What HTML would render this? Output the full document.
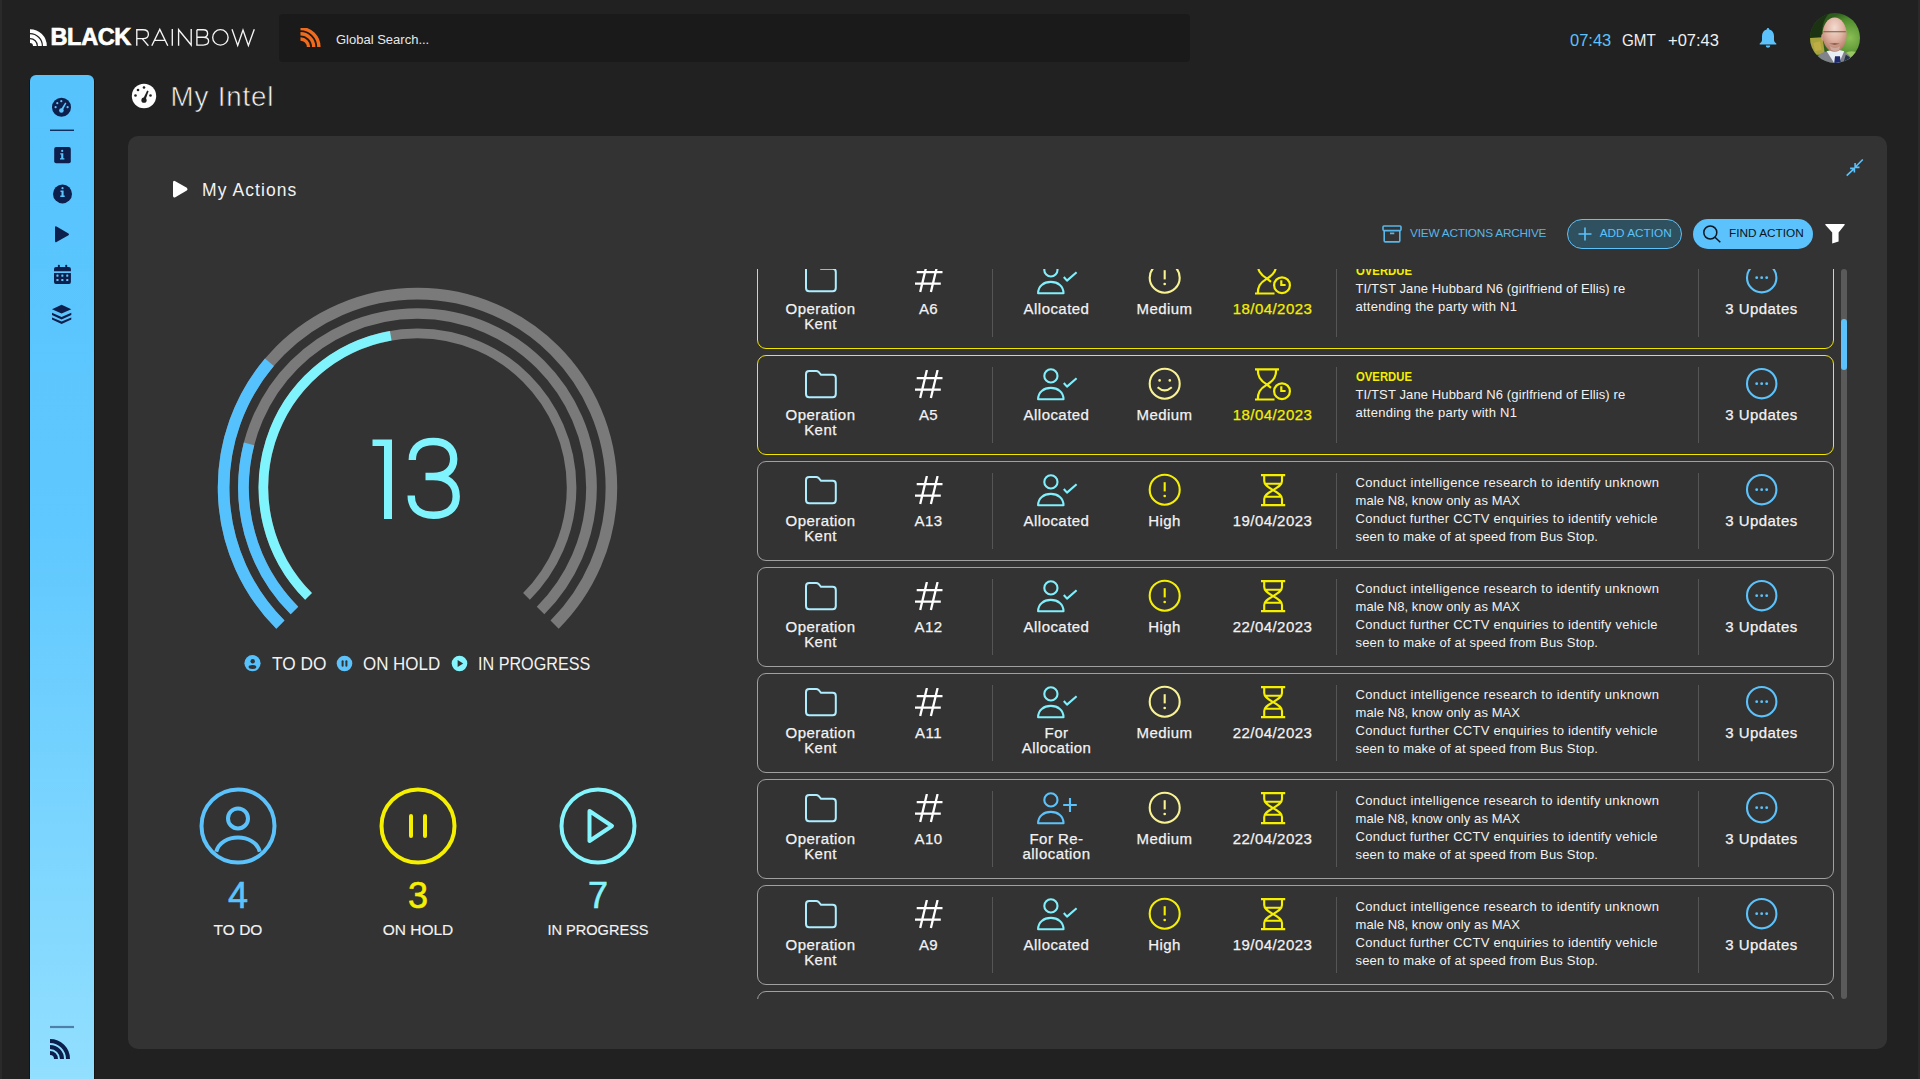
<!DOCTYPE html>
<html><head><meta charset="utf-8">
<style>
*{margin:0;padding:0;box-sizing:border-box}
html,body{width:1920px;height:1079px;overflow:hidden;background:#212121;font-family:"Liberation Sans",sans-serif;color:#fff}
.a{position:absolute}
#edgeL{left:0;top:0;width:2px;height:1079px;background:#2a2a2a}
#edgeR{right:0;top:0;width:2px;height:1079px;background:#2a2a2a}
#search{left:279px;top:14px;width:911px;height:48px;background:#1a1a1a;border-radius:4px}
#side{left:30px;top:75px;width:64px;height:1004px;border-radius:6px 6px 0 0;background:linear-gradient(#56c3fd 0%,#5fc8fe 45%,#92dfff 100%)}
#panel{left:128px;top:136px;width:1759px;height:913px;background:#333333;border-radius:10px}
#list{left:757px;top:269px;width:1080px;height:730px;overflow:hidden}
.card{left:0;width:1077px;height:100px}
.card::before{content:"";position:absolute;left:0;top:0;right:0;bottom:0;border:1.5px solid #a0a0a0;border-radius:9px}
.card.over::before{border-color:#f0e600}
.dv{top:12px;width:1px;height:76px;background:#555}
.desc{left:598.5px;top:12.8px;font-size:13px;line-height:18px;color:#f2f2f2;white-space:nowrap}
.od{color:#f5ef00;font-weight:bold;display:inline-block;transform:scaleX(.87);transform-origin:0 0}
.lbl{text-align:center;font-size:15px;line-height:15px;letter-spacing:.45px;white-space:nowrap;-webkit-text-stroke:.25px currentColor}
#track{left:1841px;top:269px;width:6px;height:730px;border-radius:3px;background:#5a5a5a}
#thumb{left:1841px;top:318.5px;width:6px;height:51px;border-radius:3px;background:#5bc2fb}
.txt{white-space:nowrap;line-height:1}
</style></head><body>
<div class="a" id="edgeL"></div><div class="a" id="edgeR"></div>

<!-- LOGO -->
<svg class="a" style="left:0;top:0" width="270" height="60" viewBox="0 0 270 60">
<g fill="none" stroke="#fff" stroke-width="3.8">
<path d="M30 41.1 A4.9 4.9 0 0 1 34.9 46"/>
<path d="M30 36.1 A9.9 9.9 0 0 1 39.9 46"/>
<path d="M30 31.1 A14.9 14.9 0 0 1 44.9 46"/>
</g>
<g fill="none" stroke="#f4f4f4" stroke-width="1.35" stroke-linejoin="miter">
<path d="M136.8 45.7 L136.8 29.75 L143 29.75 C146.6 29.75 148.4 31.6 148.4 34.2 C148.4 36.8 146.6 38.6 143 38.6 L136.8 38.6 M142.2 38.6 L148.4 45.7"/>
<path d="M151.8 45.7 L159.8 29.4 L167.8 45.7 M154.6 40.3 L165 40.3"/>
<path d="M172.3 29.1 L172.3 45.7"/>
<path d="M178.6 45.7 L178.6 29.75 L191.2 45.05 L191.2 29.1"/>
<path d="M196.9 29.75 L203.3 29.75 C206.3 29.75 207.6 31.4 207.6 33.4 C207.6 35.6 206 37.2 203.3 37.2 L196.9 37.2 M203.3 37.2 C206.9 37.2 208.6 39 208.6 41.1 C208.6 43.4 206.9 45.05 203.3 45.05 L196.9 45.05 L196.9 29.75"/>
<ellipse cx="220.4" cy="37.4" rx="7.7" ry="7.75"/>
<path d="M232 29.3 L237.7 45.5 L243 30 L248.4 45.5 L254.3 29.3"/>
</g>
</svg>
<div class="a txt" style="left:50.5px;top:26.3px;font-size:23.5px;font-weight:bold;letter-spacing:-0.35px;-webkit-text-stroke:0.7px #fff">BLACK</div>
<!-- SEARCH -->
<div class="a" id="search"></div>
<svg class="a" style="left:299px;top:28px" width="22" height="21" viewBox="0 0 22 21">
<g fill="none" stroke="#f26b1d" stroke-width="3.4" stroke-linecap="butt">
<path d="M1.5 11 A8 8 0 0 1 9.5 19"/>
<path d="M1.5 5.8 A13.2 13.2 0 0 1 14.7 19"/>
<path d="M1.5 0.6 A18.4 18.4 0 0 1 19.9 19"/>
</g></svg>
<div class="a txt" style="left:336px;top:33px;font-size:13px;color:#e8e8e8">Global Search...</div>

<!-- TIME -->
<div class="a txt" style="left:1570px;top:32px;font-size:16.5px;color:#5bc2fb">07:43</div>
<div class="a txt" style="left:1622px;top:32px;font-size:16.5px;color:#f0f0f0;transform:scaleX(.92);transform-origin:0 0">GMT</div>
<div class="a txt" style="left:1668px;top:32px;font-size:16.5px;color:#f0f0f0">+07:43</div>
<!-- BELL -->
<svg class="a" style="left:1759px;top:28px" width="18" height="20" viewBox="0 0 18 20">
<path fill="#5bc2fb" d="M9 0 C9.8 0 10.2 .6 10.2 1.4 C13.2 2 15 4.5 15 8 L15 12 C15 13.5 16 14.5 17.3 15.6 L17.3 16.6 L0.7 16.6 L0.7 15.6 C2 14.5 3 13.5 3 12 L3 8 C3 4.5 4.8 2 7.8 1.4 C7.8 .6 8.2 0 9 0Z M6.8 17.6 L11.2 17.6 C11.2 19 10.2 19.8 9 19.8 C7.8 19.8 6.8 19 6.8 17.6Z"/></svg>
<!-- AVATAR -->
<svg class="a" style="left:1810px;top:13px" width="50" height="50" viewBox="0 0 60 60">
<defs><clipPath id="avc"><circle cx="30" cy="30" r="30"/></clipPath>
<radialGradient id="bgG" cx="80%" cy="50%" r="55%"><stop offset="0" stop-color="#8cbf55"/><stop offset="0.7" stop-color="#4d8a2c"/><stop offset="1" stop-color="#2d5a1d"/></radialGradient>
<radialGradient id="skin" cx="50%" cy="30%" r="65%"><stop offset="0" stop-color="#f2dcd2"/><stop offset="0.55" stop-color="#e0b3a2"/><stop offset="1" stop-color="#b9826f"/></radialGradient>
</defs>
<g clip-path="url(#avc)">
<rect width="60" height="60" fill="url(#bgG)"/>
<path d="M0 0 L24 0 C18 4 14 14 14 30 L0 30Z" fill="#1b3313"/>
<path d="M0 30 L15 29 L18 50 L0 50Z" fill="#a9a43e"/>
<path d="M4 36 L12 34 L14 44 L6 46Z" fill="#c9b04a" opacity="0.7"/>
<ellipse cx="50" cy="54" rx="11" ry="8" fill="#a5d068" opacity="0.85"/>
<path d="M6 60 L10 51 C16 46 22 45 30 47 C38 45 44 46 48 52 L52 60Z" fill="#80838a"/>
<path d="M20 46 L29 60 L35 60 L41 46 L34 44 L27 44Z" fill="#e9edf5"/>
<path d="M30 52 L36 52 L37 60 L29 60Z" fill="#1f2a6a"/>
<path d="M43 50 L48 53 L45 60 L40 60Z" fill="#25324a"/>
<ellipse cx="16" cy="29" rx="2.5" ry="4" fill="#d29c88"/>
<ellipse cx="29.5" cy="26" rx="14.5" ry="20.5" fill="url(#skin)"/>
<path d="M16 22.5 L43 22.5" stroke="#6a6040" stroke-width="1.3"/>
<path d="M23 37 Q30 35.5 36 37 Q30 39 23 37Z" fill="#7a4a40"/>
<path d="M24 40 Q30 44 36 40 L35 44 Q30 47 25 44Z" fill="#d8c0b8" opacity="0.6"/>
</g></svg>
<!-- SIDEBAR -->
<div class="a" id="side"></div><div class="a" style="left:29px;top:80px;width:1px;height:999px;background:#171513"></div><div class="a" style="left:94px;top:80px;width:1px;height:999px;background:#171513"></div>


<!-- SIDEBAR ICONS -->
<svg class="a" style="left:30px;top:75px" width="64" height="1004" viewBox="0 0 64 1004">
<g fill="#0c1f4d">
 <circle cx="31.5" cy="32.3" r="9.5"/>
 <rect x="20" y="54.6" width="24" height="1.3"/>
 <rect x="24.2" y="71.9" width="16.6" height="16.4" rx="2"/>
 <circle cx="32.5" cy="118.9" r="9.5"/>
 <path d="M26.5 151.5 Q25 150.7 25 152.5 L25 166 Q25 167.8 26.5 167 L38.5 160.2 Q39.6 159.3 38.5 158.4Z"/>
 <path d="M24 194 Q24 192 26 192 L38.9 192 Q40.9 192 40.9 194 L40.9 196.2 L24 196.2Z"/>
 <rect x="27.9" y="189.8" width="1.9" height="3.5" rx="0.8"/><rect x="35.3" y="189.8" width="1.9" height="3.5" rx="0.8"/>
 <path d="M24 198 L40.9 198 L40.9 207 Q40.9 208.9 39 208.9 L25.9 208.9 Q24 208.9 24 207Z"/>
 <path d="M31.6 229.8 L41.3 234.3 L31.6 238.6 L22 234.3Z"/>
 <path d="M22 237.7 L31.6 242.1 L41.3 237.7 L41.3 240 L31.6 244.4 L22 240Z"/>
 <path d="M22 242.5 L31.6 246.6 L41.3 242.5 L41.3 244.6 L31.6 248.9 L22 244.6Z"/>
</g>
<g fill="#5bc5fe">
 <circle cx="27.3" cy="28.2" r="1.1"/><circle cx="31.3" cy="26.2" r="1.1"/><circle cx="25.6" cy="32.2" r="1.1"/><circle cx="37.6" cy="32.2" r="1.1"/>
 <circle cx="31.4" cy="35.5" r="2.3"/><path d="M30.5 35 L35.2 27.6 L36.4 28.3 L32.4 36Z"/>
 <circle cx="32.2" cy="75.9" r="1.1"/><path d="M30.2 78.3 L33.3 78.3 L33.3 83.2 L34.4 83.2 L34.4 84.6 L30 84.6 L30 83.2 L31.2 83.2 L31.2 79.6 L30.2 79.6Z"/>
 <circle cx="32.5" cy="113.2" r="1.1"/><path d="M30.5 115.6 L33.6 115.6 L33.6 120.5 L34.7 120.5 L34.7 121.9 L30.3 121.9 L30.3 120.5 L31.5 120.5 L31.5 116.9 L30.5 116.9Z"/>
 <rect x="26.4" y="199.6" width="2.1" height="2.1" rx="0.4"/><rect x="31.3" y="199.6" width="2.1" height="2.1" rx="0.4"/><rect x="36.2" y="199.6" width="2.1" height="2.1" rx="0.4"/>
 <rect x="26.4" y="204" width="2.1" height="2.1" rx="0.4"/><rect x="31.3" y="204" width="2.1" height="2.1" rx="0.4"/><rect x="36.2" y="204" width="2.1" height="2.1" rx="0.4"/>
</g>
<rect x="20" y="950.9" width="24" height="2.2" fill="#4d7fa8"/>
<g fill="none" stroke="#0c1f4d" stroke-width="4">
 <path d="M20 978 A6 6 0 0 1 26 984"/>
 <path d="M20 972 A12 12 0 0 1 32 984"/>
 <path d="M20 966 A18 18 0 0 1 38 984"/>
</g>
</svg>

<!-- TITLE -->
<svg class="a" style="left:131px;top:83px" width="26" height="26" viewBox="0 0 26 26">
<circle cx="13" cy="13" r="12.2" fill="#fff"/>
<g fill="#212121"><circle cx="13" cy="4.5" r="1.3"/><circle cx="7" cy="7" r="1.3"/><circle cx="4.5" cy="12.5" r="1.3"/><circle cx="19.5" cy="12.5" r="1.3"/>
<circle cx="13" cy="17.2" r="2.6"/><path d="M11.8 16.5 L16.2 7.5 L17.6 8.2 L14.2 17.4Z"/></g></svg>
<div class="a txt" style="left:170.5px;top:82.5px;font-size:27.7px;letter-spacing:0.85px;color:#f2f2f2;-webkit-text-stroke:0.6px #212121;paint-order:normal">My Intel</div>

<!-- PANEL -->
<div class="a" id="panel"></div>

<!-- PANEL LEFT -->
<svg class="a" style="left:172px;top:180px" width="18" height="19" viewBox="0 0 18 19"><path d="M1 2.6 Q1 0 3.3 1.2 L14.8 7.8 Q16.4 9.2 14.8 10.6 L3.3 17.2 Q1 18.4 1 15.8Z" fill="#fff"/></svg>
<div class="a txt" style="left:202px;top:181.7px;font-size:17.5px;letter-spacing:1.08px;color:#f2f2f2">My Actions</div>
<svg class="a" style="left:0;top:0" width="900" height="1079">
<path d="M280.39 624.61 A193.9 193.9 0 1 1 554.61 624.61" fill="none" stroke="#7a7a7a" stroke-width="11.6"/>
<path d="M280.39 624.61 A193.9 193.9 0 0 1 269.40 362.35" fill="none" stroke="#55c1fd" stroke-width="11.6"/>
<path d="M294.46 610.54 A174.0 174.0 0 1 1 540.54 610.54" fill="none" stroke="#7a7a7a" stroke-width="10.7"/>
<path d="M294.46 610.54 A174.0 174.0 0 0 1 249.04 443.93" fill="none" stroke="#55c1fd" stroke-width="10.7"/>
<path d="M308.53 596.47 A154.1 154.1 0 1 1 526.47 596.47" fill="none" stroke="#7a7a7a" stroke-width="9.6"/>
<path d="M308.53 596.47 A154.1 154.1 0 0 1 390.74 335.74" fill="none" stroke="#80f4fd" stroke-width="9.6"/>
<g fill="#80f4fd"><path d="M372.5 439.5 L392 439.5 L392 519 L384 519 L384 446 L372.5 446Z"/></g>
<path d="M412.3 460 C412.3 447 421.5 441.5 433.3 441.5 C445.5 441.5 453.7 448 453.7 459 C453.7 470 445.5 476.5 433 476.5 L425.5 476.5 L433 476.5 C447.5 476.5 456.2 484 456.2 496.5 C456.2 509 446.5 515.3 433.5 515.3 C419.5 515.3 411.2 508 411.2 495.5" fill="none" stroke="#80f4fd" stroke-width="7.4"/>
</svg>

<!-- LEGEND -->
<svg class="a" style="left:244px;top:655px" width="17" height="17" viewBox="0 0 17 17"><circle cx="8.5" cy="8.2" r="8.1" fill="#55c1fd"/><circle cx="8.7" cy="6.3" r="2.2" fill="#333"/><ellipse cx="8.5" cy="12" rx="3.9" ry="1.9" fill="#333"/></svg>
<div class="a txt" style="left:271.6px;top:655px;font-size:18px;color:#f2f2f2;transform:scaleX(.961);transform-origin:0 0">TO DO</div>
<svg class="a" style="left:336px;top:655px" width="17" height="17" viewBox="0 0 17 17"><circle cx="8.5" cy="8.5" r="7.8" fill="#5bc2fb"/><rect x="5.6" y="5.2" width="2" height="6.6" rx="1" fill="#333"/><rect x="9.4" y="5.2" width="2" height="6.6" rx="1" fill="#333"/></svg>
<div class="a txt" style="left:363.3px;top:655px;font-size:18px;color:#f2f2f2;transform:scaleX(.941);transform-origin:0 0">ON HOLD</div>
<svg class="a" style="left:451px;top:655px" width="17" height="17" viewBox="0 0 17 17"><circle cx="8.5" cy="8.5" r="7.8" fill="#84f4fd"/><path d="M6.6 5 L12.2 8.5 L6.6 12Z" fill="#333"/></svg>
<div class="a txt" style="left:477.8px;top:655px;font-size:18px;color:#f2f2f2;transform:scaleX(.898);transform-origin:0 0">IN PROGRESS</div>

<!-- STATS -->
<svg class="a" style="left:198px;top:786px" width="80" height="80" viewBox="0 0 80 80"><g fill="none" stroke="#5bc2fb" stroke-width="4"><circle cx="40" cy="40" r="36.5"/><circle cx="40" cy="32.4" r="10"/><path d="M18.2 65.8 C23 46.8 57 46.8 61.8 65.8"/></g></svg>
<div class="a txt" style="left:138px;top:878px;width:200px;text-align:center;font-size:36px;color:#5bc2fb;-webkit-text-stroke:.6px #5bc2fb">4</div>
<div class="a txt" style="left:138px;top:922px;width:200px;text-align:center;font-size:15.5px;color:#f2f2f2;-webkit-text-stroke:.15px #f2f2f2">TO DO</div>
<svg class="a" style="left:378px;top:786px" width="80" height="80" viewBox="0 0 80 80"><g fill="none" stroke="#f5ef00" stroke-width="4" stroke-linecap="round"><circle cx="40" cy="40" r="36.5"/><path d="M33 30 L33 50 M47 30 L47 50"/></g></svg>
<div class="a txt" style="left:318px;top:878px;width:200px;text-align:center;font-size:36px;color:#f5ef00;-webkit-text-stroke:.6px #f5ef00">3</div>
<div class="a txt" style="left:318px;top:922px;width:200px;text-align:center;font-size:15.5px;color:#f2f2f2;-webkit-text-stroke:.15px #f2f2f2">ON HOLD</div>
<svg class="a" style="left:558px;top:786px" width="80" height="80" viewBox="0 0 80 80"><g fill="none" stroke="#84f4fd" stroke-width="4" stroke-linejoin="round"><circle cx="40" cy="40" r="36.5"/><path d="M31.5 25 L54 40 L31.5 55Z"/></g></svg>
<div class="a txt" style="left:498px;top:878px;width:200px;text-align:center;font-size:36px;color:#84f4fd;-webkit-text-stroke:.6px #84f4fd">7</div>
<div class="a txt" style="left:498px;top:922px;width:200px;text-align:center;font-size:15.5px;color:#f2f2f2;-webkit-text-stroke:.15px #f2f2f2;transform:scaleX(.94)">IN PROGRESS</div>

<!-- COMPRESS -->
<svg class="a" style="left:1844px;top:157px" width="22" height="22" viewBox="0 0 22 22"><g fill="none" stroke="#5bc2fb" stroke-width="1.6"><path d="M18.8 2.5 L11.1 10.3 M11.1 6.1 L11.1 10.3 L15.5 10.4 M2.7 18.6 L10.4 11.4 M6.1 11.4 L10.4 11.4 L10.4 15.6"/></g></svg>
<!-- TOOLBAR -->
<svg class="a" style="left:1382px;top:225px" width="20" height="18" viewBox="0 0 20 18"><g fill="none" stroke="#5ab6e8" stroke-width="1.6"><rect x="1" y="1" width="18" height="4.6" rx="1"/><path d="M2.2 5.6 L2.2 15.8 Q2.2 16.9 3.3 16.9 L16.7 16.9 Q17.8 16.9 17.8 15.8 L17.8 5.6 M8 8.4 L12.3 8.4"/></g></svg>
<div class="a txt" style="left:1410px;top:228.3px;font-size:11.8px;letter-spacing:-0.2px;color:#5ab6e8">VIEW ACTIONS ARCHIVE</div>
<div class="a" style="left:1567px;top:219px;width:115px;height:30px;border-radius:15px;border:1.5px solid #5bc2fb;background:#2f505e"></div>
<svg class="a" style="left:1577px;top:226px" width="16" height="16" viewBox="0 0 16 16"><path d="M1.5 8 L14.5 8 M8 1.5 L8 14.5" stroke="#5bc2fb" stroke-width="1.6"/></svg>
<div class="a txt" style="left:1599.7px;top:228.3px;font-size:11.8px;color:#5bc2fb">ADD ACTION</div>
<div class="a" style="left:1693px;top:219px;width:120px;height:30px;border-radius:15px;background:#5bc2fb"></div>
<svg class="a" style="left:1701px;top:223px" width="22" height="22" viewBox="0 0 22 22"><g fill="none" stroke="#0b1620" stroke-width="1.5"><circle cx="9.3" cy="9.5" r="6.5"/><path d="M14 14.3 L19.3 19.3"/></g></svg>
<div class="a txt" style="left:1729px;top:228.3px;font-size:11.8px;color:#0b1620">FIND ACTION</div>
<svg class="a" style="left:1824px;top:223px" width="22" height="22" viewBox="0 0 22 22"><path d="M1.2 1.8 Q1 1 2 1 L20 1 Q21 1 20.8 1.8 L14.6 9.5 L14.6 18.5 L8.2 20.6 L8.2 9.5Z" fill="#fff"/></svg>
<!-- LIST -->
<div class="a" id="list">
<div class="a card over" style="top:-20px"><svg class="a" style="left:48px;top:14.5px" width="32" height="29" viewBox="0 0 32 29"><path d="M1 4.2 Q1 1 4.2 1 L11.2 1 Q12.6 1 13.6 1.9 L16 4.8 L27.6 4.8 Q30.8 4.8 30.8 8 L30.8 24 Q30.8 27.2 27.6 27.2 L4.2 27.2 Q1 27.2 1 24Z" fill="none" stroke="#aeeeff" stroke-width="2"/></svg><svg class="a" style="left:158px;top:14.5px" width="29" height="29" viewBox="0 0 29 29"><g stroke="#fff" stroke-width="2.3" fill="none"><path d="M1.7 8.1 L27.5 8.1 M0 19.7 L25.8 19.7 M11.9 0 L5.2 28 M22.6 0 L15.9 28"/></g></svg><div class="a dv" style="left:234.5px"></div><svg class="a" style="left:280px;top:12.5px" width="41" height="33" viewBox="0 0 41 33"><g fill="none" stroke="#7ff0fc" stroke-width="2.1" stroke-linejoin="round"><circle cx="13.9" cy="7.9" r="6.6"/><path d="M1.1 31.3 L26.5 31.3 C26.5 24.2 21 19.9 13.8 19.9 C6.6 19.9 1.1 24.2 1.1 31.3Z"/><path d="M26.8 15 L30 18.6 L39.6 10.2"/></g></svg><svg class="a" style="left:391.3px;top:12.2px" width="34" height="34" viewBox="0 0 34 34"><g fill="none" stroke="#f8f290" stroke-width="2.1"><circle cx="16.7" cy="16.7" r="15"/><path d="M16.7 9.2 L16.7 18.4"/><circle cx="16.7" cy="23" r="1.35" fill="#f8f290" stroke="none"/></g></svg><svg class="a" style="left:497.5px;top:12.5px" width="38" height="34" viewBox="0 0 38 34"><g fill="none" stroke="#f5ef00" stroke-width="2.2"><path d="M0 1.3 L24 1.3 M2.8 1.3 C2.8 8 4.5 12 12 16.6 C19.5 12 21.2 8 21.2 1.3 M0 31.5 L19.5 31.5 M2.8 31.5 C2.8 25 4.5 21 12 16.6 L16 19.8"/><circle cx="27" cy="23.2" r="7.9"/><path d="M26.3 18.2 L26.3 23 L30.6 23"/></g></svg><div class="a dv" style="left:578.5px"></div><div class="a desc"><div class="od">OVERDUE</div><div style="letter-spacing:.12px">TI/TST Jane Hubbard N6 (girlfriend of Ellis) re</div><div style="letter-spacing:.26px">attending the party with N1</div></div><div class="a dv" style="left:940.9px"></div><svg class="a" style="left:988px;top:11.8px" width="34" height="34" viewBox="0 0 34 34"><circle cx="16.7" cy="16.7" r="14.7" fill="none" stroke="#5bc2fb" stroke-width="2.1"/><g fill="#5bc2fb"><circle cx="11.7" cy="16.7" r="1.4"/><circle cx="16.7" cy="16.7" r="1.4"/><circle cx="21.7" cy="16.7" r="1.4"/></g></svg><div class="a lbl" style="left:3.5px;top:52px;width:120px;color:#f2f2f2">Operation<br>Kent</div><div class="a lbl" style="left:111.5px;top:52px;width:120px;color:#f2f2f2">A6</div><div class="a lbl" style="left:239.5px;top:52px;width:120px;color:#f2f2f2">Allocated</div><div class="a lbl" style="left:347.5px;top:52px;width:120px;color:#f2f2f2">Medium</div><div class="a lbl" style="left:455.5px;top:52px;width:120px;color:#f5ef00">18/04/2023</div><div class="a lbl" style="left:944.5px;top:52px;width:120px;color:#f2f2f2">3 Updates</div></div>
<div class="a card over" style="top:86px"><svg class="a" style="left:48px;top:14.5px" width="32" height="29" viewBox="0 0 32 29"><path d="M1 4.2 Q1 1 4.2 1 L11.2 1 Q12.6 1 13.6 1.9 L16 4.8 L27.6 4.8 Q30.8 4.8 30.8 8 L30.8 24 Q30.8 27.2 27.6 27.2 L4.2 27.2 Q1 27.2 1 24Z" fill="none" stroke="#aeeeff" stroke-width="2"/></svg><svg class="a" style="left:158px;top:14.5px" width="29" height="29" viewBox="0 0 29 29"><g stroke="#fff" stroke-width="2.3" fill="none"><path d="M1.7 8.1 L27.5 8.1 M0 19.7 L25.8 19.7 M11.9 0 L5.2 28 M22.6 0 L15.9 28"/></g></svg><div class="a dv" style="left:234.5px"></div><svg class="a" style="left:280px;top:12.5px" width="41" height="33" viewBox="0 0 41 33"><g fill="none" stroke="#7ff0fc" stroke-width="2.1" stroke-linejoin="round"><circle cx="13.9" cy="7.9" r="6.6"/><path d="M1.1 31.3 L26.5 31.3 C26.5 24.2 21 19.9 13.8 19.9 C6.6 19.9 1.1 24.2 1.1 31.3Z"/><path d="M26.8 15 L30 18.6 L39.6 10.2"/></g></svg><svg class="a" style="left:391.3px;top:12.2px" width="34" height="34" viewBox="0 0 34 34"><g fill="none" stroke="#f8f290" stroke-width="2.1"><circle cx="16.7" cy="16.7" r="15"/><circle cx="11.6" cy="13.4" r="1.3" fill="#f8f290" stroke="none"/><circle cx="21.8" cy="13.4" r="1.3" fill="#f8f290" stroke="none"/><path d="M9.6 20.2 Q16.7 26.5 23.8 20.2"/></g></svg><svg class="a" style="left:497.5px;top:12.5px" width="38" height="34" viewBox="0 0 38 34"><g fill="none" stroke="#f5ef00" stroke-width="2.2"><path d="M0 1.3 L24 1.3 M2.8 1.3 C2.8 8 4.5 12 12 16.6 C19.5 12 21.2 8 21.2 1.3 M0 31.5 L19.5 31.5 M2.8 31.5 C2.8 25 4.5 21 12 16.6 L16 19.8"/><circle cx="27" cy="23.2" r="7.9"/><path d="M26.3 18.2 L26.3 23 L30.6 23"/></g></svg><div class="a dv" style="left:578.5px"></div><div class="a desc"><div class="od">OVERDUE</div><div style="letter-spacing:.12px">TI/TST Jane Hubbard N6 (girlfriend of Ellis) re</div><div style="letter-spacing:.26px">attending the party with N1</div></div><div class="a dv" style="left:940.9px"></div><svg class="a" style="left:988px;top:11.8px" width="34" height="34" viewBox="0 0 34 34"><circle cx="16.7" cy="16.7" r="14.7" fill="none" stroke="#5bc2fb" stroke-width="2.1"/><g fill="#5bc2fb"><circle cx="11.7" cy="16.7" r="1.4"/><circle cx="16.7" cy="16.7" r="1.4"/><circle cx="21.7" cy="16.7" r="1.4"/></g></svg><div class="a lbl" style="left:3.5px;top:52px;width:120px;color:#f2f2f2">Operation<br>Kent</div><div class="a lbl" style="left:111.5px;top:52px;width:120px;color:#f2f2f2">A5</div><div class="a lbl" style="left:239.5px;top:52px;width:120px;color:#f2f2f2">Allocated</div><div class="a lbl" style="left:347.5px;top:52px;width:120px;color:#f2f2f2">Medium</div><div class="a lbl" style="left:455.5px;top:52px;width:120px;color:#f5ef00">18/04/2023</div><div class="a lbl" style="left:944.5px;top:52px;width:120px;color:#f2f2f2">3 Updates</div></div>
<div class="a card" style="top:192px"><svg class="a" style="left:48px;top:14.5px" width="32" height="29" viewBox="0 0 32 29"><path d="M1 4.2 Q1 1 4.2 1 L11.2 1 Q12.6 1 13.6 1.9 L16 4.8 L27.6 4.8 Q30.8 4.8 30.8 8 L30.8 24 Q30.8 27.2 27.6 27.2 L4.2 27.2 Q1 27.2 1 24Z" fill="none" stroke="#aeeeff" stroke-width="2"/></svg><svg class="a" style="left:158px;top:14.5px" width="29" height="29" viewBox="0 0 29 29"><g stroke="#fff" stroke-width="2.3" fill="none"><path d="M1.7 8.1 L27.5 8.1 M0 19.7 L25.8 19.7 M11.9 0 L5.2 28 M22.6 0 L15.9 28"/></g></svg><div class="a dv" style="left:234.5px"></div><svg class="a" style="left:280px;top:12.5px" width="41" height="33" viewBox="0 0 41 33"><g fill="none" stroke="#7ff0fc" stroke-width="2.1" stroke-linejoin="round"><circle cx="13.9" cy="7.9" r="6.6"/><path d="M1.1 31.3 L26.5 31.3 C26.5 24.2 21 19.9 13.8 19.9 C6.6 19.9 1.1 24.2 1.1 31.3Z"/><path d="M26.8 15 L30 18.6 L39.6 10.2"/></g></svg><svg class="a" style="left:391.3px;top:12.2px" width="34" height="34" viewBox="0 0 34 34"><g fill="none" stroke="#f5ef00" stroke-width="2.1"><circle cx="16.7" cy="16.7" r="15"/><path d="M16.7 9.2 L16.7 18.4"/><circle cx="16.7" cy="23" r="1.35" fill="#f5ef00" stroke="none"/></g></svg><svg class="a" style="left:503.6px;top:12.9px" width="25" height="33" viewBox="0 0 25 33"><g fill="none" stroke="#f5ef00" stroke-width="2.1"><path d="M0 1.1 L24.2 1.1 M0 31.1 L24.2 31.1 M3.2 1.1 L3.2 7 C3.2 10.5 6 12.5 12.1 16.1 C18.2 12.5 21 10.5 21 7 L21 1.1 M3.2 31.1 L3.2 25 C3.2 21.5 6 19.5 12.1 16.1 C18.2 19.5 21 21.5 21 25 L21 31.1 M3.2 9.7 L21 9.7 M3.2 22.8 L21 22.8"/></g></svg><div class="a dv" style="left:578.5px"></div><div class="a desc"><div style="letter-spacing:.36px">Conduct intelligence research to identify unknown</div><div style="letter-spacing:.08px">male N8, know only as MAX</div><div style="letter-spacing:.28px">Conduct further CCTV enquiries to identify vehicle</div><div style="letter-spacing:.18px">seen to make of at speed from Bus Stop.</div></div><div class="a dv" style="left:940.9px"></div><svg class="a" style="left:988px;top:11.8px" width="34" height="34" viewBox="0 0 34 34"><circle cx="16.7" cy="16.7" r="14.7" fill="none" stroke="#5bc2fb" stroke-width="2.1"/><g fill="#5bc2fb"><circle cx="11.7" cy="16.7" r="1.4"/><circle cx="16.7" cy="16.7" r="1.4"/><circle cx="21.7" cy="16.7" r="1.4"/></g></svg><div class="a lbl" style="left:3.5px;top:52px;width:120px;color:#f2f2f2">Operation<br>Kent</div><div class="a lbl" style="left:111.5px;top:52px;width:120px;color:#f2f2f2">A13</div><div class="a lbl" style="left:239.5px;top:52px;width:120px;color:#f2f2f2">Allocated</div><div class="a lbl" style="left:347.5px;top:52px;width:120px;color:#f2f2f2">High</div><div class="a lbl" style="left:455.5px;top:52px;width:120px;color:#f2f2f2">19/04/2023</div><div class="a lbl" style="left:944.5px;top:52px;width:120px;color:#f2f2f2">3 Updates</div></div>
<div class="a card" style="top:298px"><svg class="a" style="left:48px;top:14.5px" width="32" height="29" viewBox="0 0 32 29"><path d="M1 4.2 Q1 1 4.2 1 L11.2 1 Q12.6 1 13.6 1.9 L16 4.8 L27.6 4.8 Q30.8 4.8 30.8 8 L30.8 24 Q30.8 27.2 27.6 27.2 L4.2 27.2 Q1 27.2 1 24Z" fill="none" stroke="#aeeeff" stroke-width="2"/></svg><svg class="a" style="left:158px;top:14.5px" width="29" height="29" viewBox="0 0 29 29"><g stroke="#fff" stroke-width="2.3" fill="none"><path d="M1.7 8.1 L27.5 8.1 M0 19.7 L25.8 19.7 M11.9 0 L5.2 28 M22.6 0 L15.9 28"/></g></svg><div class="a dv" style="left:234.5px"></div><svg class="a" style="left:280px;top:12.5px" width="41" height="33" viewBox="0 0 41 33"><g fill="none" stroke="#7ff0fc" stroke-width="2.1" stroke-linejoin="round"><circle cx="13.9" cy="7.9" r="6.6"/><path d="M1.1 31.3 L26.5 31.3 C26.5 24.2 21 19.9 13.8 19.9 C6.6 19.9 1.1 24.2 1.1 31.3Z"/><path d="M26.8 15 L30 18.6 L39.6 10.2"/></g></svg><svg class="a" style="left:391.3px;top:12.2px" width="34" height="34" viewBox="0 0 34 34"><g fill="none" stroke="#f5ef00" stroke-width="2.1"><circle cx="16.7" cy="16.7" r="15"/><path d="M16.7 9.2 L16.7 18.4"/><circle cx="16.7" cy="23" r="1.35" fill="#f5ef00" stroke="none"/></g></svg><svg class="a" style="left:503.6px;top:12.9px" width="25" height="33" viewBox="0 0 25 33"><g fill="none" stroke="#f5ef00" stroke-width="2.1"><path d="M0 1.1 L24.2 1.1 M0 31.1 L24.2 31.1 M3.2 1.1 L3.2 7 C3.2 10.5 6 12.5 12.1 16.1 C18.2 12.5 21 10.5 21 7 L21 1.1 M3.2 31.1 L3.2 25 C3.2 21.5 6 19.5 12.1 16.1 C18.2 19.5 21 21.5 21 25 L21 31.1 M3.2 9.7 L21 9.7 M3.2 22.8 L21 22.8"/></g></svg><div class="a dv" style="left:578.5px"></div><div class="a desc"><div style="letter-spacing:.36px">Conduct intelligence research to identify unknown</div><div style="letter-spacing:.08px">male N8, know only as MAX</div><div style="letter-spacing:.28px">Conduct further CCTV enquiries to identify vehicle</div><div style="letter-spacing:.18px">seen to make of at speed from Bus Stop.</div></div><div class="a dv" style="left:940.9px"></div><svg class="a" style="left:988px;top:11.8px" width="34" height="34" viewBox="0 0 34 34"><circle cx="16.7" cy="16.7" r="14.7" fill="none" stroke="#5bc2fb" stroke-width="2.1"/><g fill="#5bc2fb"><circle cx="11.7" cy="16.7" r="1.4"/><circle cx="16.7" cy="16.7" r="1.4"/><circle cx="21.7" cy="16.7" r="1.4"/></g></svg><div class="a lbl" style="left:3.5px;top:52px;width:120px;color:#f2f2f2">Operation<br>Kent</div><div class="a lbl" style="left:111.5px;top:52px;width:120px;color:#f2f2f2">A12</div><div class="a lbl" style="left:239.5px;top:52px;width:120px;color:#f2f2f2">Allocated</div><div class="a lbl" style="left:347.5px;top:52px;width:120px;color:#f2f2f2">High</div><div class="a lbl" style="left:455.5px;top:52px;width:120px;color:#f2f2f2">22/04/2023</div><div class="a lbl" style="left:944.5px;top:52px;width:120px;color:#f2f2f2">3 Updates</div></div>
<div class="a card" style="top:404px"><svg class="a" style="left:48px;top:14.5px" width="32" height="29" viewBox="0 0 32 29"><path d="M1 4.2 Q1 1 4.2 1 L11.2 1 Q12.6 1 13.6 1.9 L16 4.8 L27.6 4.8 Q30.8 4.8 30.8 8 L30.8 24 Q30.8 27.2 27.6 27.2 L4.2 27.2 Q1 27.2 1 24Z" fill="none" stroke="#aeeeff" stroke-width="2"/></svg><svg class="a" style="left:158px;top:14.5px" width="29" height="29" viewBox="0 0 29 29"><g stroke="#fff" stroke-width="2.3" fill="none"><path d="M1.7 8.1 L27.5 8.1 M0 19.7 L25.8 19.7 M11.9 0 L5.2 28 M22.6 0 L15.9 28"/></g></svg><div class="a dv" style="left:234.5px"></div><svg class="a" style="left:280px;top:12.5px" width="41" height="33" viewBox="0 0 41 33"><g fill="none" stroke="#7ff0fc" stroke-width="2.1" stroke-linejoin="round"><circle cx="13.9" cy="7.9" r="6.6"/><path d="M1.1 31.3 L26.5 31.3 C26.5 24.2 21 19.9 13.8 19.9 C6.6 19.9 1.1 24.2 1.1 31.3Z"/><path d="M26.8 15 L30 18.6 L39.6 10.2"/></g></svg><svg class="a" style="left:391.3px;top:12.2px" width="34" height="34" viewBox="0 0 34 34"><g fill="none" stroke="#f8f290" stroke-width="2.1"><circle cx="16.7" cy="16.7" r="15"/><path d="M16.7 9.2 L16.7 18.4"/><circle cx="16.7" cy="23" r="1.35" fill="#f8f290" stroke="none"/></g></svg><svg class="a" style="left:503.6px;top:12.9px" width="25" height="33" viewBox="0 0 25 33"><g fill="none" stroke="#f5ef00" stroke-width="2.1"><path d="M0 1.1 L24.2 1.1 M0 31.1 L24.2 31.1 M3.2 1.1 L3.2 7 C3.2 10.5 6 12.5 12.1 16.1 C18.2 12.5 21 10.5 21 7 L21 1.1 M3.2 31.1 L3.2 25 C3.2 21.5 6 19.5 12.1 16.1 C18.2 19.5 21 21.5 21 25 L21 31.1 M3.2 9.7 L21 9.7 M3.2 22.8 L21 22.8"/></g></svg><div class="a dv" style="left:578.5px"></div><div class="a desc"><div style="letter-spacing:.36px">Conduct intelligence research to identify unknown</div><div style="letter-spacing:.08px">male N8, know only as MAX</div><div style="letter-spacing:.28px">Conduct further CCTV enquiries to identify vehicle</div><div style="letter-spacing:.18px">seen to make of at speed from Bus Stop.</div></div><div class="a dv" style="left:940.9px"></div><svg class="a" style="left:988px;top:11.8px" width="34" height="34" viewBox="0 0 34 34"><circle cx="16.7" cy="16.7" r="14.7" fill="none" stroke="#5bc2fb" stroke-width="2.1"/><g fill="#5bc2fb"><circle cx="11.7" cy="16.7" r="1.4"/><circle cx="16.7" cy="16.7" r="1.4"/><circle cx="21.7" cy="16.7" r="1.4"/></g></svg><div class="a lbl" style="left:3.5px;top:52px;width:120px;color:#f2f2f2">Operation<br>Kent</div><div class="a lbl" style="left:111.5px;top:52px;width:120px;color:#f2f2f2">A11</div><div class="a lbl" style="left:239.5px;top:52px;width:120px;color:#f2f2f2">For<br>Allocation</div><div class="a lbl" style="left:347.5px;top:52px;width:120px;color:#f2f2f2">Medium</div><div class="a lbl" style="left:455.5px;top:52px;width:120px;color:#f2f2f2">22/04/2023</div><div class="a lbl" style="left:944.5px;top:52px;width:120px;color:#f2f2f2">3 Updates</div></div>
<div class="a card" style="top:510px"><svg class="a" style="left:48px;top:14.5px" width="32" height="29" viewBox="0 0 32 29"><path d="M1 4.2 Q1 1 4.2 1 L11.2 1 Q12.6 1 13.6 1.9 L16 4.8 L27.6 4.8 Q30.8 4.8 30.8 8 L30.8 24 Q30.8 27.2 27.6 27.2 L4.2 27.2 Q1 27.2 1 24Z" fill="none" stroke="#aeeeff" stroke-width="2"/></svg><svg class="a" style="left:158px;top:14.5px" width="29" height="29" viewBox="0 0 29 29"><g stroke="#fff" stroke-width="2.3" fill="none"><path d="M1.7 8.1 L27.5 8.1 M0 19.7 L25.8 19.7 M11.9 0 L5.2 28 M22.6 0 L15.9 28"/></g></svg><div class="a dv" style="left:234.5px"></div><svg class="a" style="left:280px;top:12.5px" width="41" height="33" viewBox="0 0 41 33"><g fill="none" stroke="#5bc2fb" stroke-width="2.1" stroke-linejoin="round"><circle cx="13.9" cy="7.9" r="6.6"/><path d="M1.1 31.3 L26.5 31.3 C26.5 24.2 21 19.9 13.8 19.9 C6.6 19.9 1.1 24.2 1.1 31.3Z"/><path d="M26.2 13 L39.8 13 M33 6 L33 20"/></g></svg><svg class="a" style="left:391.3px;top:12.2px" width="34" height="34" viewBox="0 0 34 34"><g fill="none" stroke="#f8f290" stroke-width="2.1"><circle cx="16.7" cy="16.7" r="15"/><path d="M16.7 9.2 L16.7 18.4"/><circle cx="16.7" cy="23" r="1.35" fill="#f8f290" stroke="none"/></g></svg><svg class="a" style="left:503.6px;top:12.9px" width="25" height="33" viewBox="0 0 25 33"><g fill="none" stroke="#f5ef00" stroke-width="2.1"><path d="M0 1.1 L24.2 1.1 M0 31.1 L24.2 31.1 M3.2 1.1 L3.2 7 C3.2 10.5 6 12.5 12.1 16.1 C18.2 12.5 21 10.5 21 7 L21 1.1 M3.2 31.1 L3.2 25 C3.2 21.5 6 19.5 12.1 16.1 C18.2 19.5 21 21.5 21 25 L21 31.1 M3.2 9.7 L21 9.7 M3.2 22.8 L21 22.8"/></g></svg><div class="a dv" style="left:578.5px"></div><div class="a desc"><div style="letter-spacing:.36px">Conduct intelligence research to identify unknown</div><div style="letter-spacing:.08px">male N8, know only as MAX</div><div style="letter-spacing:.28px">Conduct further CCTV enquiries to identify vehicle</div><div style="letter-spacing:.18px">seen to make of at speed from Bus Stop.</div></div><div class="a dv" style="left:940.9px"></div><svg class="a" style="left:988px;top:11.8px" width="34" height="34" viewBox="0 0 34 34"><circle cx="16.7" cy="16.7" r="14.7" fill="none" stroke="#5bc2fb" stroke-width="2.1"/><g fill="#5bc2fb"><circle cx="11.7" cy="16.7" r="1.4"/><circle cx="16.7" cy="16.7" r="1.4"/><circle cx="21.7" cy="16.7" r="1.4"/></g></svg><div class="a lbl" style="left:3.5px;top:52px;width:120px;color:#f2f2f2">Operation<br>Kent</div><div class="a lbl" style="left:111.5px;top:52px;width:120px;color:#f2f2f2">A10</div><div class="a lbl" style="left:239.5px;top:52px;width:120px;color:#f2f2f2">For Re-<br>allocation</div><div class="a lbl" style="left:347.5px;top:52px;width:120px;color:#f2f2f2">Medium</div><div class="a lbl" style="left:455.5px;top:52px;width:120px;color:#f2f2f2">22/04/2023</div><div class="a lbl" style="left:944.5px;top:52px;width:120px;color:#f2f2f2">3 Updates</div></div>
<div class="a card" style="top:616px"><svg class="a" style="left:48px;top:14.5px" width="32" height="29" viewBox="0 0 32 29"><path d="M1 4.2 Q1 1 4.2 1 L11.2 1 Q12.6 1 13.6 1.9 L16 4.8 L27.6 4.8 Q30.8 4.8 30.8 8 L30.8 24 Q30.8 27.2 27.6 27.2 L4.2 27.2 Q1 27.2 1 24Z" fill="none" stroke="#aeeeff" stroke-width="2"/></svg><svg class="a" style="left:158px;top:14.5px" width="29" height="29" viewBox="0 0 29 29"><g stroke="#fff" stroke-width="2.3" fill="none"><path d="M1.7 8.1 L27.5 8.1 M0 19.7 L25.8 19.7 M11.9 0 L5.2 28 M22.6 0 L15.9 28"/></g></svg><div class="a dv" style="left:234.5px"></div><svg class="a" style="left:280px;top:12.5px" width="41" height="33" viewBox="0 0 41 33"><g fill="none" stroke="#7ff0fc" stroke-width="2.1" stroke-linejoin="round"><circle cx="13.9" cy="7.9" r="6.6"/><path d="M1.1 31.3 L26.5 31.3 C26.5 24.2 21 19.9 13.8 19.9 C6.6 19.9 1.1 24.2 1.1 31.3Z"/><path d="M26.8 15 L30 18.6 L39.6 10.2"/></g></svg><svg class="a" style="left:391.3px;top:12.2px" width="34" height="34" viewBox="0 0 34 34"><g fill="none" stroke="#f5ef00" stroke-width="2.1"><circle cx="16.7" cy="16.7" r="15"/><path d="M16.7 9.2 L16.7 18.4"/><circle cx="16.7" cy="23" r="1.35" fill="#f5ef00" stroke="none"/></g></svg><svg class="a" style="left:503.6px;top:12.9px" width="25" height="33" viewBox="0 0 25 33"><g fill="none" stroke="#f5ef00" stroke-width="2.1"><path d="M0 1.1 L24.2 1.1 M0 31.1 L24.2 31.1 M3.2 1.1 L3.2 7 C3.2 10.5 6 12.5 12.1 16.1 C18.2 12.5 21 10.5 21 7 L21 1.1 M3.2 31.1 L3.2 25 C3.2 21.5 6 19.5 12.1 16.1 C18.2 19.5 21 21.5 21 25 L21 31.1 M3.2 9.7 L21 9.7 M3.2 22.8 L21 22.8"/></g></svg><div class="a dv" style="left:578.5px"></div><div class="a desc"><div style="letter-spacing:.36px">Conduct intelligence research to identify unknown</div><div style="letter-spacing:.08px">male N8, know only as MAX</div><div style="letter-spacing:.28px">Conduct further CCTV enquiries to identify vehicle</div><div style="letter-spacing:.18px">seen to make of at speed from Bus Stop.</div></div><div class="a dv" style="left:940.9px"></div><svg class="a" style="left:988px;top:11.8px" width="34" height="34" viewBox="0 0 34 34"><circle cx="16.7" cy="16.7" r="14.7" fill="none" stroke="#5bc2fb" stroke-width="2.1"/><g fill="#5bc2fb"><circle cx="11.7" cy="16.7" r="1.4"/><circle cx="16.7" cy="16.7" r="1.4"/><circle cx="21.7" cy="16.7" r="1.4"/></g></svg><div class="a lbl" style="left:3.5px;top:52px;width:120px;color:#f2f2f2">Operation<br>Kent</div><div class="a lbl" style="left:111.5px;top:52px;width:120px;color:#f2f2f2">A9</div><div class="a lbl" style="left:239.5px;top:52px;width:120px;color:#f2f2f2">Allocated</div><div class="a lbl" style="left:347.5px;top:52px;width:120px;color:#f2f2f2">High</div><div class="a lbl" style="left:455.5px;top:52px;width:120px;color:#f2f2f2">19/04/2023</div><div class="a lbl" style="left:944.5px;top:52px;width:120px;color:#f2f2f2">3 Updates</div></div>
<div class="a card" style="top:722px"><svg class="a" style="left:48px;top:14.5px" width="32" height="29" viewBox="0 0 32 29"><path d="M1 4.2 Q1 1 4.2 1 L11.2 1 Q12.6 1 13.6 1.9 L16 4.8 L27.6 4.8 Q30.8 4.8 30.8 8 L30.8 24 Q30.8 27.2 27.6 27.2 L4.2 27.2 Q1 27.2 1 24Z" fill="none" stroke="#aeeeff" stroke-width="2"/></svg><svg class="a" style="left:158px;top:14.5px" width="29" height="29" viewBox="0 0 29 29"><g stroke="#fff" stroke-width="2.3" fill="none"><path d="M1.7 8.1 L27.5 8.1 M0 19.7 L25.8 19.7 M11.9 0 L5.2 28 M22.6 0 L15.9 28"/></g></svg><div class="a dv" style="left:234.5px"></div><svg class="a" style="left:280px;top:12.5px" width="41" height="33" viewBox="0 0 41 33"><g fill="none" stroke="#7ff0fc" stroke-width="2.1" stroke-linejoin="round"><circle cx="13.9" cy="7.9" r="6.6"/><path d="M1.1 31.3 L26.5 31.3 C26.5 24.2 21 19.9 13.8 19.9 C6.6 19.9 1.1 24.2 1.1 31.3Z"/><path d="M26.8 15 L30 18.6 L39.6 10.2"/></g></svg><svg class="a" style="left:391.3px;top:12.2px" width="34" height="34" viewBox="0 0 34 34"><g fill="none" stroke="#f5ef00" stroke-width="2.1"><circle cx="16.7" cy="16.7" r="15"/><path d="M16.7 9.2 L16.7 18.4"/><circle cx="16.7" cy="23" r="1.35" fill="#f5ef00" stroke="none"/></g></svg><svg class="a" style="left:503.6px;top:12.9px" width="25" height="33" viewBox="0 0 25 33"><g fill="none" stroke="#f5ef00" stroke-width="2.1"><path d="M0 1.1 L24.2 1.1 M0 31.1 L24.2 31.1 M3.2 1.1 L3.2 7 C3.2 10.5 6 12.5 12.1 16.1 C18.2 12.5 21 10.5 21 7 L21 1.1 M3.2 31.1 L3.2 25 C3.2 21.5 6 19.5 12.1 16.1 C18.2 19.5 21 21.5 21 25 L21 31.1 M3.2 9.7 L21 9.7 M3.2 22.8 L21 22.8"/></g></svg><div class="a dv" style="left:578.5px"></div><div class="a desc"><div style="letter-spacing:.36px">Conduct intelligence research to identify unknown</div><div style="letter-spacing:.08px">male N8, know only as MAX</div><div style="letter-spacing:.28px">Conduct further CCTV enquiries to identify vehicle</div><div style="letter-spacing:.18px">seen to make of at speed from Bus Stop.</div></div><div class="a dv" style="left:940.9px"></div><svg class="a" style="left:988px;top:11.8px" width="34" height="34" viewBox="0 0 34 34"><circle cx="16.7" cy="16.7" r="14.7" fill="none" stroke="#5bc2fb" stroke-width="2.1"/><g fill="#5bc2fb"><circle cx="11.7" cy="16.7" r="1.4"/><circle cx="16.7" cy="16.7" r="1.4"/><circle cx="21.7" cy="16.7" r="1.4"/></g></svg><div class="a lbl" style="left:3.5px;top:52px;width:120px;color:#f2f2f2">Operation<br>Kent</div><div class="a lbl" style="left:111.5px;top:52px;width:120px;color:#f2f2f2">A8</div><div class="a lbl" style="left:239.5px;top:52px;width:120px;color:#f2f2f2">Allocated</div><div class="a lbl" style="left:347.5px;top:52px;width:120px;color:#f2f2f2">High</div><div class="a lbl" style="left:455.5px;top:52px;width:120px;color:#f2f2f2">19/04/2023</div><div class="a lbl" style="left:944.5px;top:52px;width:120px;color:#f2f2f2">3 Updates</div></div>
</div>
<div class="a" id="track"></div><div class="a" id="thumb"></div>
</body></html>
